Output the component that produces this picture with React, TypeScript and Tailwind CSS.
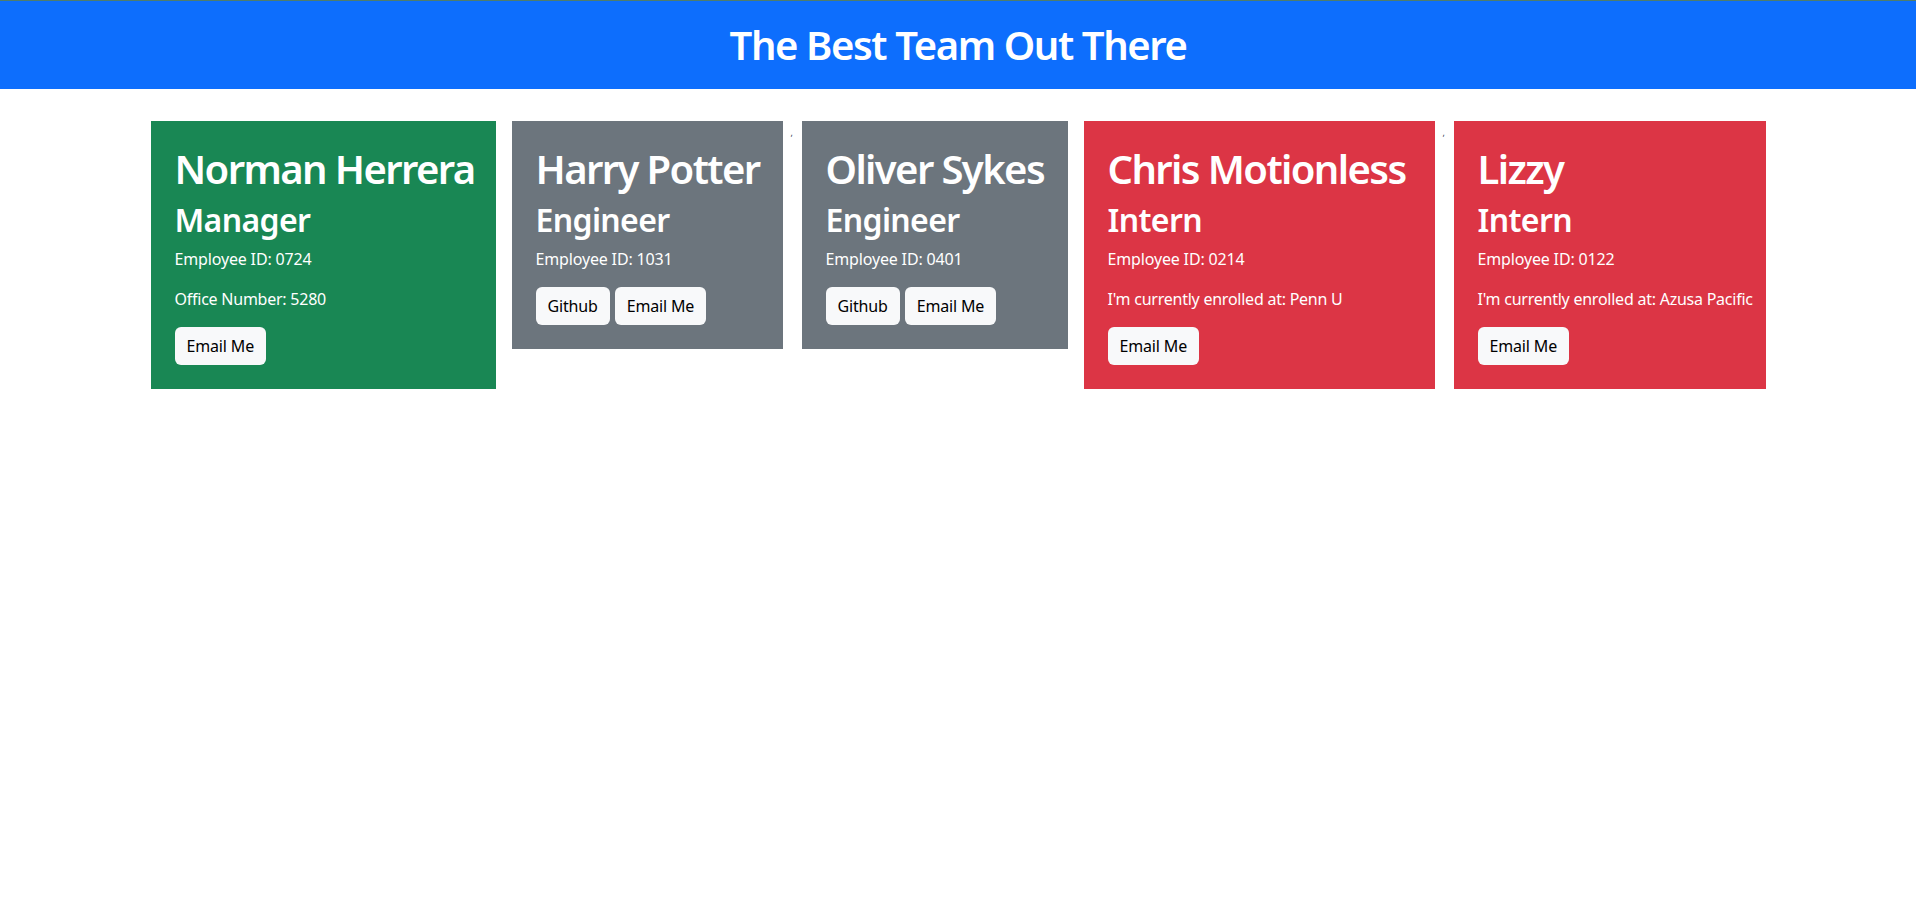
import React from "react";

type Member = {
  name: string;
  role: "Manager" | "Engineer" | "Intern";
  id: string;
  extra?: string;
  width: string;
};

const team: Member[] = [
  { name: "Norman Herrera", role: "Manager", id: "0724", extra: "Office Number: 5280", width: "w-[345px]" },
  { name: "Harry Potter", role: "Engineer", id: "1031", width: "w-[271px]" },
  { name: "Oliver Sykes", role: "Engineer", id: "0401", width: "w-[266px]" },
  { name: "Chris Motionless", role: "Intern", id: "0214", extra: "I'm currently enrolled at: Penn U", width: "w-[351px]" },
  { name: "Lizzy", role: "Intern", id: "0122", extra: "I'm currently enrolled at: Azusa Pacific", width: "w-[312px]" },
];

const colors = {
  Manager: "bg-[#198754]",
  Engineer: "bg-[#6c757d]",
  Intern: "bg-[#dc3545]",
};

const Button = ({ children }: { children: React.ReactNode }) => (
  <button className="h-[38px] rounded-[6px] bg-[#f8f9fa] px-3 text-base leading-6 tracking-[-0.01em] text-black">
    {children}
  </button>
);

const Card = ({ m }: { m: Member }) => (
  <div className={`mx-2 shrink-0 p-6 text-white ${m.width} ${colors[m.role]}`}>
    {/* name + role */}
    <h1 className="mb-2 whitespace-nowrap text-[40px] font-semibold leading-[48px] tracking-[-0.04em]">
      {m.name}
    </h1>
    <h2 className="mb-2 text-[32px] font-semibold leading-[38px] tracking-[-0.02em]">{m.role}</h2>
    <p className="mb-4 text-base leading-6 tracking-[-0.01em]">Employee ID: {m.id}</p>
    {m.extra && <p className="mb-4 whitespace-nowrap text-base leading-6 tracking-[-0.015em]">{m.extra}</p>}
    {/* actions */}
    <div className="flex gap-[5px]">
      {m.role === "Engineer" && <Button>Github</Button>}
      <Button>Email Me</Button>
    </div>
  </div>
);

const Comma = () => <span className="mt-[7px] w-[3px] text-[9px] leading-none text-gray-700">,</span>;

export default function App() {
  return (
    <div className="min-h-[903px] bg-white" style={{ fontFamily: '"Segoe UI", "Noto Sans", "Open Sans", sans-serif' }}>
      {/* HEADER */}
      <header className="flex h-[89px] items-center justify-center border-t border-[#4f7d6b] bg-[#0d6efd]">
        <h1 className="text-[40px] font-semibold leading-[48px] tracking-[-0.035em] text-white">The Best Team Out There</h1>
      </header>
      {/* CARDS */}
      <main className="flex items-start justify-center pt-8">
        <Card m={team[0]} />
        <Card m={team[1]} />
        <Comma />
        <Card m={team[2]} />
        <Card m={team[3]} />
        <Comma />
        <Card m={team[4]} />
      </main>
    </div>
  );
}
